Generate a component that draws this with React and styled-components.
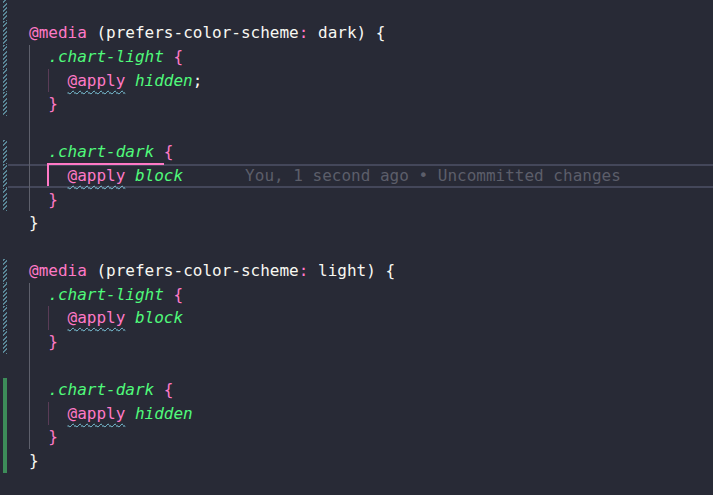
import React from 'react';
import styled, { createGlobalStyle, css } from 'styled-components';

const CH = 16 * 0.602;
const ROW = 23.79;

const colors = {
	bg: '#282a36',
	text: '#f8f8f2',
	pink: '#ff79c6',
	green: '#50fa7b',
	guide: '#5e606c',
	guideInner: '#5a3c57',
	lineBorder: '#44475a',
	blame: '#5c5e6a',
	squiggle: '#7fcbe0',
	modified: '#5a8797',
	added: '#3d8c59',
};

const GlobalStyle = createGlobalStyle`
	html, body {
		margin: 0;
		padding: 0;
		background: ${colors.bg};
		height: 100%;
		overflow: hidden;
	}
	#root {
		height: 100%;
	}
`;

const Editor = styled.div`
	display: flex;
	flex-direction: column;
	margin-top: -2.7px;
	font-family: 'DejaVu Sans Mono', 'Liberation Mono', monospace;
	font-size: 16px;
	color: ${colors.text};
	background: ${colors.bg};
`;

const Line = styled.div`
	display: flex;
	height: ${ROW}px;
	line-height: ${ROW}px;
	white-space: pre;
`;

const Gutter = styled.div`
	width: 8px;
	flex-shrink: 0;
	display: flex;
	padding-left: 3px;
	box-sizing: border-box;
`;

const Decoration = styled.div`
	width: 4px;
	height: 100%;
	${(p) =>
		p.$kind === 'mod' &&
		css`
			background: repeating-linear-gradient(
				-45deg,
				${colors.modified} 0 1.4px,
				transparent 1.4px 3px
			);
		`}
	${(p) =>
		p.$kind === 'add' &&
		css`
			background: ${colors.added};
		`}
`;

const Content = styled.div`
	position: relative;
	flex: 1;
	display: flex;
	padding-left: 21px;
	${(p) =>
		p.$active &&
		css`
			box-shadow: inset 0 2px 0 ${colors.lineBorder},
				inset 0 -2px 0 ${colors.lineBorder};
		`}
`;

const IndentCol = styled.span`
	display: inline-block;
	width: ${CH * 2}px;
	height: 100%;
	flex-shrink: 0;
	box-sizing: border-box;
	border-left: 1px solid
		${(p) => (p.$level === 0 ? colors.guide : colors.guideInner)};
	${(p) =>
		p.$active &&
		css`
			border-left: none;
		`}
`;

const BracketGuide = styled.span`
	position: absolute;
	left: ${21 + CH * 2 - 1}px;
	top: -1px;
	width: ${CH * 12 + 1}px;
	height: ${ROW - 1}px;
	border-top: 2px solid ${colors.pink};
	border-left: 2px solid ${colors.pink};
	box-sizing: border-box;
`;

const Token = styled.span`
	color: ${(p) => p.$color};
	font-style: ${(p) => (p.$italic ? 'italic' : 'normal')};
	${(p) =>
		p.$squiggle &&
		css`
			text-decoration: underline wavy ${colors.squiggle};
			text-decoration-thickness: 1px;
			text-underline-offset: 4px;
		`}
`;

const Blame = styled.span`
	margin-left: 62px;
	color: ${colors.blame};
`;

const T = {
	plain: (s) => ({ s, color: colors.text }),
	pink: (s) => ({ s, color: colors.pink }),
	sel: (s) => ({ s, color: colors.green, italic: true }),
	val: (s) => ({ s, color: colors.green, italic: true }),
	apply: () => ({ s: '@apply', color: colors.pink, squiggle: true }),
};

const media = (scheme) => [
	T.pink('@media'),
	T.plain(' (prefers-color-scheme'),
	T.pink(':'),
	T.plain(` ${scheme}) {`),
];

const lines = [
	{ deco: 'mod', indent: 0, tokens: [] },
	{ deco: 'mod', indent: 0, tokens: media('dark') },
	{ deco: 'mod', indent: 1, tokens: [T.sel('.chart-light'), T.plain(' '), T.pink('{')] },
	{ deco: 'mod', indent: 2, tokens: [T.apply(), T.plain(' '), T.val('hidden'), T.plain(';')] },
	{ deco: 'mod', indent: 1, tokens: [T.pink('}')] },
	{ deco: null, indent: 1, tokens: [] },
	{ deco: 'mod', indent: 1, tokens: [T.sel('.chart-dark'), T.plain(' '), T.pink('{')] },
	{
		deco: 'mod',
		indent: 2,
		active: true,
		tokens: [T.apply(), T.plain(' '), T.val('block')],
		blame: 'You, 1 second ago • Uncommitted changes',
	},
	{ deco: 'mod', indent: 1, tokens: [T.pink('}')] },
	{ deco: null, indent: 0, tokens: [T.plain('}')] },
	{ deco: null, indent: 0, tokens: [] },
	{ deco: 'mod', indent: 0, tokens: media('light') },
	{ deco: 'mod', indent: 1, tokens: [T.sel('.chart-light'), T.plain(' '), T.pink('{')] },
	{ deco: 'mod', indent: 2, tokens: [T.apply(), T.plain(' '), T.val('block')] },
	{ deco: 'mod', indent: 1, tokens: [T.pink('}')] },
	{ deco: null, indent: 1, tokens: [] },
	{ deco: 'add', indent: 1, tokens: [T.sel('.chart-dark'), T.plain(' '), T.pink('{')] },
	{ deco: 'add', indent: 2, tokens: [T.apply(), T.plain(' '), T.val('hidden')] },
	{ deco: 'add', indent: 1, tokens: [T.pink('}')] },
	{ deco: 'add', indent: 0, tokens: [T.plain('}')] },
	{ deco: null, indent: 0, tokens: [] },
];

export default function App() {
	return (
		<>
			<GlobalStyle />
			<Editor>
				{lines.map((line, i) => (
					<Line key={i}>
						<Gutter>
							<Decoration $kind={line.deco} />
						</Gutter>
						<Content $active={line.active}>
							{Array.from({ length: line.indent }).map((_, lvl) => (
								<IndentCol
									key={lvl}
									$level={lvl}
									$active={line.active && lvl === 1}
								/>
							))}
							{line.tokens.map((t, j) => (
								<Token
									key={j}
									$color={t.color}
									$italic={t.italic}
									$squiggle={t.squiggle}
								>
									{t.s}
								</Token>
							))}
							{line.blame && <Blame>{line.blame}</Blame>}
							{line.active && <BracketGuide />}
						</Content>
					</Line>
				))}
			</Editor>
		</>
	);
}
